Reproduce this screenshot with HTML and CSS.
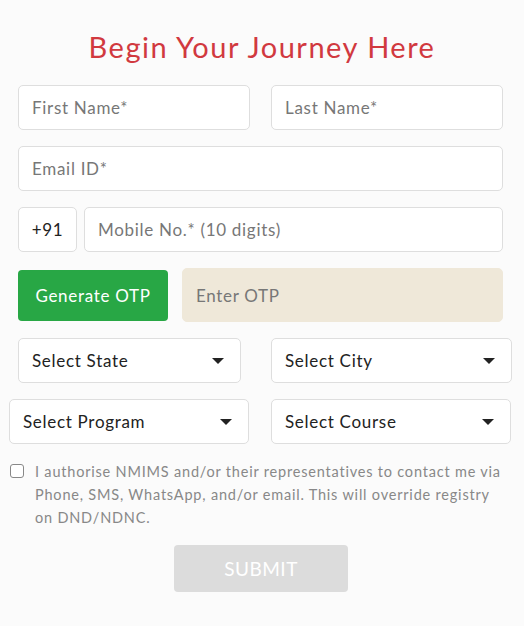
FILE: index.html
```html
<!DOCTYPE html>
<html>
<head>
<meta charset="utf-8">
<link rel="stylesheet" href="styles.css">
</head>
<body>
<div class="page">
  <h1 class="title">Begin Your Journey Here</h1>
  <div class="row two">
    <div class="field"><span class="ph">First Name*</span></div>
    <div class="field"><span class="ph">Last Name*</span></div>
  </div>
  <div class="row">
    <div class="field"><span class="ph">Email ID*</span></div>
  </div>
  <div class="row phone">
    <div class="field code"><span class="val">+91</span></div>
    <div class="field"><span class="ph">Mobile No.* (10 digits)</span></div>
  </div>
  <div class="row otp">
    <div class="btn-otp">Generate OTP</div>
    <div class="field otp-field"><span class="ph">Enter OTP</span></div>
  </div>
  <div class="row sel1">
    <div class="field select"><span class="val">Select State</span><span class="caret"></span></div>
    <div class="field select"><span class="val">Select City</span><span class="caret"></span></div>
  </div>
  <div class="row sel2">
    <div class="field select"><span class="val">Select Program</span><span class="caret"></span></div>
    <div class="field select"><span class="val">Select Course</span><span class="caret"></span></div>
  </div>
  <div class="consent">
    <span class="box"></span>
    <p>I authorise NMIMS and/or their representatives to contact me via Phone, SMS, WhatsApp, and/or email. This will override registry on DND/NDNC.</p>
  </div>
  <div class="submit-wrap"><div class="submit">SUBMIT</div></div>
</div>
</body>
</html>
```
FILE: styles.css
```css
* { box-sizing: border-box; }
html, body { margin: 0; padding: 0; }
body {
  background: #fbfbfb;
  font-family: Lato, "Open Sans", sans-serif;
  width: 524px;
  height: 626px;
  overflow: hidden;
}
.page { padding-top: 30px; }
.title {
  margin: 0 0 21px 0;
  text-align: center;
  font-weight: 400;
  font-size: 29px;
  line-height: 34px;
  color: #d1393f;
  letter-spacing: 1.5px;
}
.row {
  display: grid;
  grid-template-columns: 1fr;
  margin: 0 0 16px 18px;
  width: 485px;
}
.row.two { grid-template-columns: 232px 232px; column-gap: 21px; }
.row.phone { grid-template-columns: 59px 419px; column-gap: 7px; }
.row.otp { grid-template-columns: 150px 321px; column-gap: 14px; align-items: center; }
.row.sel1 { grid-template-columns: 223px 241px; column-gap: 30px; width: 494px; }
.row.sel2 { grid-template-columns: 240px 240px; column-gap: 22px; margin-left: 9px; width: 502px; }
.field {
  height: 45px;
  background: #fff;
  border: 1px solid #dedede;
  border-radius: 5px;
  display: flex;
  align-items: center;
  padding: 0 13px;
  font-size: 17px;
  letter-spacing: 0.7px;
}
.ph { color: #777; }
.val { color: #222; }
.code { justify-content: center; padding: 0; }
.btn-otp {
  height: 51px;
  background: #28a745;
  color: #fff;
  border-radius: 4px;
  display: flex;
  align-items: center;
  justify-content: center;
  font-size: 17px;
  letter-spacing: 0.7px;
}
.otp-field {
  height: 54px;
  background: #efe8d9;
  border-color: #efe8d9;
}
.select { justify-content: space-between; }
.caret {
  width: 0; height: 0;
  border-left: 6px solid transparent;
  border-right: 6px solid transparent;
  border-top: 6px solid #222;
  margin-right: 3px;
}
.consent {
  display: flex;
  margin: 13px 20px 0 10px;
  gap: 11px;
}
.box {
  flex: none;
  width: 14px; height: 14px;
  border: 1px solid #888;
  border-radius: 3px;
  background: #fff;
  margin-top: 4px;
}
.consent p {
  margin: 0;
  font-size: 14.5px;
  line-height: 23px;
  color: #888;
  letter-spacing: 0.8px;
}
.submit-wrap { display: flex; justify-content: center; margin-top: 16px; padding-right: 2px; }
.submit {
  width: 174px;
  height: 47px;
  background: #dcdcdc;
  border-radius: 4px;
  color: #fff;
  font-size: 19px;
  letter-spacing: 0.5px;
  display: flex;
  align-items: center;
  justify-content: center;
}
```
